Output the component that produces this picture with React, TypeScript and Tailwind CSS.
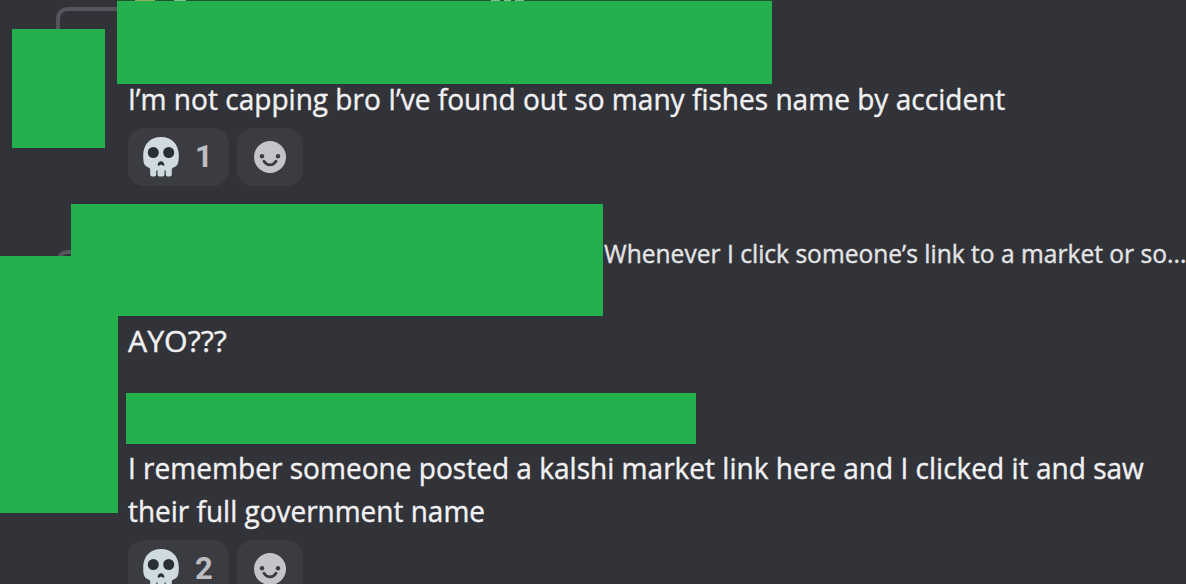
import { ReactNode } from "react";

const SkullIcon = () => (
  <svg viewBox="0 0 36 40" className="h-10 w-9 shrink-0">
    <path
      d="M18 0C7.500 0 .2 7.200 .2 18c0 6.200 .4 9 2.600 11 1.500 1.400 4.400 1.500 4.400 3.500V37.500a2 2 0 0 0 2 2h2a2 2 0 0 0 2-2v-4h1.300v4a2 2 0 0 0 2 2h3a2 2 0 0 0 2-2v-4h1.300v4a2 2 0 0 0 2 2h2a2 2 0 0 0 2-2v-5c0-2 2.800-2.100 4.400-3.500 2.200-2 2.600-4.800 2.600-11C35.800 7.200 28.500 0 18 0Z"
      fill="#d0dae1"
    />
    <circle cx="10.300" cy="15.500" r="5.500" fill="#292f33" />
    <circle cx="25.700" cy="15.500" r="5.500" fill="#292f33" />
    <path
      d="M18 24.300c-2 0-3.300 2-3.300 3.400 0 1.500 1.700 1.200 2.300.4.500-.6 1.500-.6 2 0 .6.800 2.300 1.100 2.300-.4 0-1.400-1.300-3.400-3.300-3.400Z"
      fill="#292f33"
    />
  </svg>
);

const SmileIcon = () => (
  <svg viewBox="0 0 32 32" className="size-8">
    <circle cx="16" cy="16" r="16" fill="#c4c5c9" />
    <circle cx="8" cy="15.300" r="2.200" fill="#3b3c42" />
    <circle cx="24" cy="15.300" r="2.200" fill="#3b3c42" />
    <path
      d="M10 20.300c3 4.800 9 4.800 12 0"
      fill="none"
      stroke="#3b3c42"
      strokeWidth="2.800"
      strokeLinecap="round"
    />
  </svg>
);

const Reactions = ({ count }: { count: number }) => (
  <div className="flex h-[58px] shrink-0 gap-2">
    <div className="flex w-[101px] items-center rounded-2xl bg-[#3b3c42] pl-[15px]">
      <SkullIcon />
      <span className="w-[50px] text-center font-['Roboto',sans-serif] text-[31px] leading-[58px] font-bold text-[#bdbec2]">
        {count}
      </span>
    </div>
    <div className="flex w-[66px] items-center justify-center rounded-2xl bg-[#3b3c42]">
      <SmileIcon />
    </div>
  </div>
);

const Line = ({ className, children }: { className: string; children: ReactNode }) => (
  <p
    className={`h-[43px] w-max origin-left text-[30px] leading-[43px] whitespace-nowrap [-webkit-text-stroke:0.4px] ${className}`}
  >
    {children}
  </p>
);

const App = () => (
  <div className="relative h-[584px] w-[1186px] overflow-hidden bg-[#323338] font-['Open_Sans','Noto_Sans',sans-serif] text-[#f1f1f3]">
    <main className="flex flex-col pt-[77px] pl-32">
      <Line className="scale-x-[0.935]">
        I’m not capping bro I’ve found out so many fishes name by accident
      </Line>
      <div className="mt-2">
        <Reactions count={1} />
      </div>

      <p className="mt-[49px] ml-[476px] h-9 w-max origin-left scale-x-[0.945] text-[26px] leading-9 whitespace-nowrap text-[#e3e4e6] [-webkit-text-stroke:0.4px]">
        Whenever I click someone’s link to a market or so...
      </p>
      <Line className="mt-12 scale-x-[1.01]">AYO???</Line>

      <Line className="mt-[84px] scale-x-[0.935]">
        I remember someone posted a kalshi market link here and I clicked it and saw
      </Line>
      <Line className="scale-x-[0.932]">their full government name</Line>
      <div className="mt-2">
        <Reactions count={2} />
      </div>
    </main>

    {/* reply connectors */}
    <div className="absolute top-[7px] left-14 h-10 w-20 rounded-tl-xl border-t-4 border-l-4 border-[#55565d]" />
    <div className="absolute top-[250px] left-14 h-10 w-20 rounded-tl-xl border-t-4 border-l-4 border-[#55565d]" />

    {/* redacted names and avatars */}
    <div className="absolute top-[29px] left-3 h-[119px] w-[93px] bg-[#24b14d]" />
    <div className="absolute top-0 left-[117px] h-[84px] w-[655px] border-t border-[#22552f] bg-[#24b14d]">
      <div className="absolute -top-px left-[18px] h-px w-5 bg-[#8fae62]" />
      <div className="absolute -top-px left-[57px] h-px w-3 bg-[#7fc48f]" />
      <div className="absolute -top-px left-[374px] h-px w-[9px] bg-[#7fc48f]" />
      <div className="absolute -top-px left-[387px] h-px w-[7px] bg-[#7fc48f]" />
      <div className="absolute -top-px left-[398px] h-px w-[9px] bg-[#7fc48f]" />
    </div>
    <div className="absolute top-[204px] left-[71px] h-28 w-[532px] bg-[#24b14d]" />
    <div className="absolute top-64 left-0 h-[257px] w-[118px] bg-[#24b14d]" />
    <div className="absolute top-[393px] left-[126px] h-[51px] w-[570px] bg-[#24b14d]" />
  </div>
);

export default App;
